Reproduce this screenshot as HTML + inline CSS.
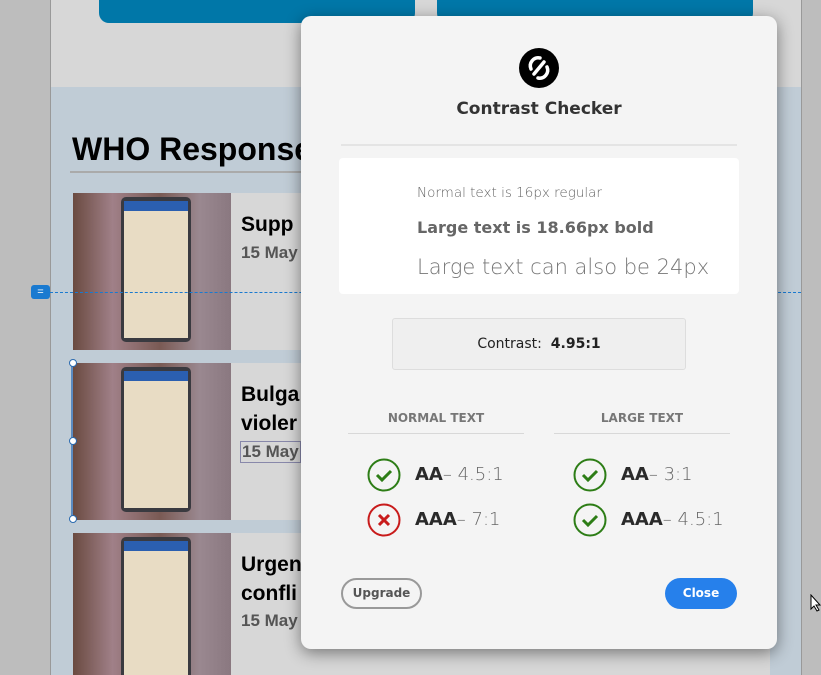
<!DOCTYPE html>
<html><head><style>
*{margin:0;padding:0;box-sizing:border-box}
html{width:821px;height:675px;overflow:hidden}
body{width:821px;height:675px;position:relative;overflow:hidden;background:#c0ccd6;font-family:"Liberation Sans",sans-serif}
.abs{position:absolute}
.img{position:absolute;left:73px;width:158px;height:157px;background:linear-gradient(90deg,#6a4a40,#a08088 25%,#7a5a54 55%,#9a8890 80%,#8a7880);overflow:hidden}
.phone{position:absolute;left:48px;top:4px;width:70px;height:145px;background:#3a3a40;border-radius:5px}
.phone div{position:absolute;left:3px;top:4px;right:3px;bottom:4px;background:#e8dcc4}
.phone div:before{content:"";position:absolute;left:0;right:0;top:0;height:10px;background:#2b5fb0}
.card{position:absolute;left:231px;width:539px;height:157px;background:#d7d7d7;overflow:hidden}
.card h3{position:absolute;left:10px;top:17px;font-size:21px;font-weight:bold;color:#000;line-height:29px}
.card p{position:absolute;left:10px;font-size:17px;font-weight:bold;color:#555}
.m{font-family:"DejaVu Sans","Liberation Sans",sans-serif}
.lbl{position:absolute;font-size:18px;color:#2a2a2a}
.lbl b{font-weight:bold}
.lbl span{color:#666;font-weight:300}
</style></head><body>
<div class="abs" style="left:0;top:0;width:51px;height:675px;background:#bdbdbd;border-right:1px solid #999"></div>
<div class="abs" style="left:801px;top:0;width:20px;height:675px;background:#bdbdbd;border-left:1px solid #999"></div>
<div class="abs" style="left:51px;top:0;width:750px;height:87px;background:#d7d7d7"></div>
<div class="abs" style="left:99px;top:0;width:316px;height:23px;background:#0077a8;border-radius:0 0 10px 10px"></div>
<div class="abs" style="left:437px;top:0;width:316px;height:23px;background:#0077a8;border-radius:0 0 10px 10px"></div>
<div class="abs" style="left:72px;top:131px;font-size:32px;font-weight:bold;color:#000">WHO Response</div>
<div class="abs" style="left:70px;top:171px;width:260px;height:2px;background:#aaa"></div>

<div class="img" style="top:193px"><div class="phone"><div></div></div></div>
<div class="card" style="top:193px"><h3>Supp</h3><p style="top:50px">15 May</p></div>
<div class="img" style="top:363px"><div class="phone"><div></div></div></div>
<div class="card" style="top:363px"><h3>Bulga<br>violer</h3><p style="top:78px;border:1px solid #88a;padding:0 1px;left:9px">15 May</p></div>
<div class="img" style="top:533px;height:142px"><div class="phone"><div></div></div></div>
<div class="card" style="top:533px;height:142px"><h3>Urgen<br>confli</h3><p style="top:78px">15 May</p></div>
<div class="abs" style="left:71px;top:362px;width:2px;height:158px;background:#5a8ac0"></div>
<div class="abs" style="left:69px;top:359px;width:8px;height:8px;border-radius:50%;border:1px solid #2a6ab0;background:#fff"></div>
<div class="abs" style="left:69px;top:437px;width:8px;height:8px;border-radius:50%;border:1px solid #2a6ab0;background:#fff"></div>
<div class="abs" style="left:69px;top:515px;width:8px;height:8px;border-radius:50%;border:1px solid #2a6ab0;background:#fff"></div>

<div class="abs" style="left:50px;top:292px;width:751px;border-top:1px dashed #1a7ad0"></div>
<div class="abs" style="left:31px;top:285px;width:19px;height:14px;background:#1a7ad0;border-radius:3px;color:#fff;font-size:11px;text-align:center;line-height:14px">=</div>

<div class="abs" style="left:301px;top:16px;width:476px;height:633px;background:#f4f4f4;border-radius:10px;box-shadow:0 4px 16px rgba(0,0,0,.45)">
 <svg class="abs" style="left:218px;top:32px" width="40" height="40" viewBox="0 0 40 40"><circle cx="20" cy="20" r="20" fill="#000"/><path d="M21 10 A8 8 0 0 0 12 21 M19 30 A8 8 0 0 0 28 19 M15 26 L25 14" stroke="#fff" stroke-width="3.5" fill="none" stroke-linecap="round"/></svg>
 <div class="abs m" style="left:0;width:476px;top:83px;text-align:center;font-size:17px;font-weight:bold;color:#333">Contrast Checker</div>
 <div class="abs" style="left:40px;top:128px;width:396px;height:2px;background:#e4e4e4"></div>
 <div class="abs" style="left:38px;top:142px;width:400px;height:136px;background:#fff;border-radius:4px">
  <div class="abs m" style="left:78px;top:27px;font-size:13.5px;color:#666;font-weight:300">Normal text is 16px regular</div>
  <div class="abs m" style="left:78px;top:60px;font-size:16px;color:#666;font-weight:bold">Large text is 18.66px bold</div>
  <div class="abs m" style="left:78px;top:97px;font-size:21px;color:#777;font-weight:300">Large text can also be 24px</div>
 </div>
 <div class="abs m" style="left:91px;top:302px;width:294px;height:52px;background:#efefef;border:1px solid #ddd;border-radius:3px;text-align:center;line-height:50px;font-size:14px;color:#222">Contrast:&nbsp; <b>4.95:1</b></div>
 <div class="abs m" style="left:47px;top:395px;width:176px;text-align:center;font-size:12px;font-weight:bold;color:#777">NORMAL TEXT</div>
 <div class="abs m" style="left:253px;top:395px;width:176px;text-align:center;font-size:12px;font-weight:bold;color:#777">LARGE TEXT</div>
 <div class="abs" style="left:47px;top:417px;width:176px;height:1px;background:#d8d8d8"></div>
 <div class="abs" style="left:253px;top:417px;width:176px;height:1px;background:#d8d8d8"></div>
 <svg class="abs" style="left:66px;top:442px" width="34" height="34"><circle cx="17" cy="17" r="15.5" fill="none" stroke="#2d7d16" stroke-width="2"/><path d="M10 17 L15 22 L24 13" stroke="#2d7d16" stroke-width="3" fill="none"/></svg>
 <svg class="abs" style="left:66px;top:487px" width="34" height="34"><circle cx="17" cy="17" r="15.5" fill="none" stroke="#c81b1b" stroke-width="2"/><path d="M12 12 L22 22 M22 12 L12 22" stroke="#c81b1b" stroke-width="3" fill="none"/></svg>
 <svg class="abs" style="left:272px;top:442px" width="34" height="34"><circle cx="17" cy="17" r="15.5" fill="none" stroke="#2d7d16" stroke-width="2"/><path d="M10 17 L15 22 L24 13" stroke="#2d7d16" stroke-width="3" fill="none"/></svg>
 <svg class="abs" style="left:272px;top:487px" width="34" height="34"><circle cx="17" cy="17" r="15.5" fill="none" stroke="#2d7d16" stroke-width="2"/><path d="M10 17 L15 22 L24 13" stroke="#2d7d16" stroke-width="3" fill="none"/></svg>
 <div class="lbl m" style="left:114px;top:448px"><b>AA</b><span>– 4.5:1</span></div>
 <div class="lbl m" style="left:114px;top:493px"><b>AAA</b><span>– 7:1</span></div>
 <div class="lbl m" style="left:320px;top:448px"><b>AA</b><span>– 3:1</span></div>
 <div class="lbl m" style="left:320px;top:493px"><b>AAA</b><span>– 4.5:1</span></div>
 <div class="abs m" style="left:40px;top:562px;width:81px;height:31px;border:2px solid #999;border-radius:16px;text-align:center;line-height:27px;font-size:12px;font-weight:bold;color:#555">Upgrade</div>
 <div class="abs m" style="left:364px;top:562px;width:72px;height:31px;background:#2680eb;border-radius:16px;text-align:center;line-height:31px;font-size:12px;font-weight:bold;color:#fff">Close</div>
</div>
<svg class="abs" style="left:810px;top:594px" width="11" height="18"><path d="M1 1 L1 15 L4 12 L7 17 L9 16 L6 11 L10 11 Z" fill="#fff" stroke="#000"/></svg>
</body></html>
